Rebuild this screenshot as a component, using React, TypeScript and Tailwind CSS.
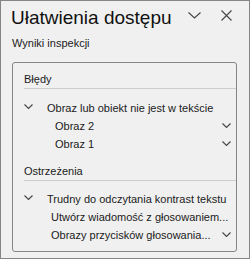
const font = { fontFamily: '"Liberation Sans", Arial, sans-serif' }

function Chevron({ className }: { className?: string }) {
  return (
    <svg width="9" height="6" viewBox="0 0 9 6" className={className}>
      <path d="M0.5 0.5 L4.5 4.5 L8.5 0.5" fill="none" stroke="#444" strokeWidth="1.1" />
    </svg>
  )
}

function Row({ indent, text, left, right }: { indent: string; text: string; left?: boolean; right?: boolean }) {
  return (
    <div className="relative flex h-[18px] items-center">
      {left && <Chevron className="absolute left-0 top-[5px]" />}
      <span className={`${indent} whitespace-nowrap text-[11px] leading-[16px] text-[#1b1b1b]`}>{text}</span>
      {right && <Chevron className="absolute right-[5px] top-[6px]" />}
    </div>
  )
}

export default function App() {
  return (
    <div style={font} className="h-[259px] w-[250px] border border-[#858585] bg-[#f0f0f0]">
      <div className="flex h-[34px] items-center pl-[10px]">
        <h1 className="text-[19px] leading-[26px] text-[#111]">Ułatwienia dostępu</h1>
        <svg width="13" height="7" viewBox="0 0 13 7" className="ml-auto mr-[20px] mt-[-6px]">
          <path d="M0.5 0.5 L6.5 6 L12.5 0.5" fill="none" stroke="#444" strokeWidth="1.1" />
        </svg>
        <svg width="11" height="11" viewBox="0 0 11 11" className="mr-[17px] mt-[-6px]">
          <path d="M0.5 0.5 L10.5 10.5 M10.5 0.5 L0.5 10.5" stroke="#444" strokeWidth="1.1" />
        </svg>
      </div>
      <div className="pl-[11px] text-[11px] leading-[16px] text-[#1b1b1b]">Wyniki inspekcji</div>
      <div className="ml-[11px] mr-[12px] mt-[11px] h-[190px] rounded-[3px] border border-[#858585] pl-[11px]">
        <div className="flex h-[26px] items-end border-b border-[#cdcdcd] pb-[1px] text-[11px] leading-[16px] text-[#1b1b1b]">Błędy</div>
        <div className="pt-[10px]">
          <Row indent="pl-[23px]" text="Obraz lub obiekt nie jest w tekście" left />
          <Row indent="pl-[31px]" text="Obraz 2" right />
          <Row indent="pl-[31px]" text="Obraz 1" right />
        </div>
        <div className="flex h-[28px] items-end border-b border-[#cdcdcd] pb-[1px] text-[11px] leading-[16px] text-[#1b1b1b]">Ostrzeżenia</div>
        <div className="pt-[9px]">
          <Row indent="pl-[23px]" text="Trudny do odczytania kontrast tekstu" left />
          <Row indent="pl-[27px]" text="Utwórz wiadomość z głosowaniem..." />
          <Row indent="pl-[27px]" text="Obrazy przycisków głosowania..." right />
        </div>
      </div>
    </div>
  )
}
